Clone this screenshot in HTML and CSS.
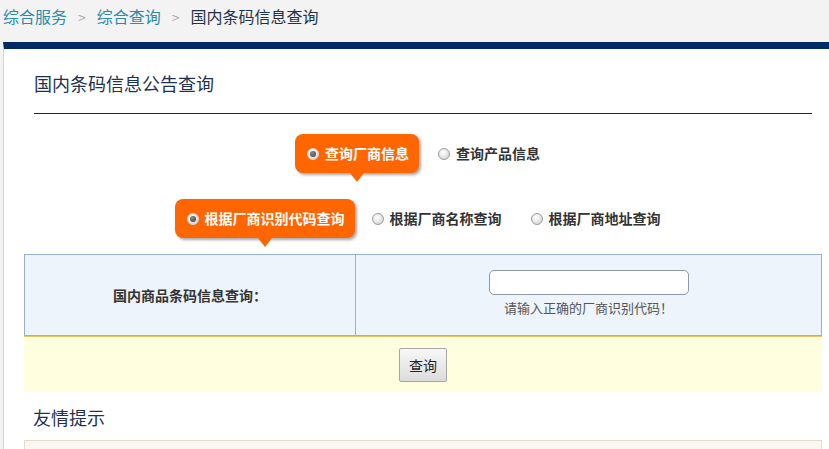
FILE: index.html
```html
<!DOCTYPE html>
<html lang="zh-CN">
<head>
<meta charset="utf-8">
<title>国内条码信息查询</title>
<link rel="stylesheet" href="styles.css">
</head>
<body>
<div class="crumb">
  <a class="crumb-link" href="#">综合服务</a><span class="sep">&gt;</span><a class="crumb-link" href="#">综合查询</a><span class="sep">&gt;</span><span class="crumb-cur">国内条码信息查询</span>
</div>
<div class="page">
  <h2 class="title">国内条码信息公告查询</h2>

  <div class="opt-row row1">
    <label class="bubble"><span class="radio checked"></span>查询厂商信息</label>
    <label class="opt gap19"><span class="radio"></span>查询产品信息</label>
  </div>

  <div class="opt-row row2">
    <label class="bubble"><span class="radio checked"></span>根据厂商识别代码查询</label>
    <label class="opt gap17"><span class="radio"></span>根据厂商名称查询</label>
    <label class="opt gap29"><span class="radio"></span>根据厂商地址查询</label>
  </div>

  <div class="query">
    <div class="q-label">国内商品条码信息查询：</div>
    <div class="q-field">
      <input class="q-input" type="text">
      <div class="q-hint">请输入正确的厂商识别代码！</div>
    </div>
  </div>
  <div class="q-actions"><button class="btn" type="button">查询</button></div>

  <h2 class="tips-title">友情提示</h2>
  <div class="tips-box"></div>
</div>
</body>
</html>
```

FILE: styles.css
```css
html, body {
  margin: 0;
  padding: 0;
}
body {
  background: #f3f3f3;
  font-family: "Noto Sans CJK SC", "Noto Sans", sans-serif;
  overflow: hidden;
  width: 829px;
  height: 449px;
}
.crumb {
  height: 42px;
  padding-left: 3px;
  font-size: 16px;
  line-height: 32px;
  display: flex;
  align-items: baseline;
}
.crumb-link {
  color: #2b8bab;
  text-decoration: none;
}
.sep {
  color: #a9a9a9;
  font-size: 14px;
  margin: 0 11px;
}
.crumb-cur {
  color: #1f3348;
}
.page {
  margin-left: 3px;
  border-left: 1px solid #d4d4d4;
  border-top: 7px solid #032b63;
  background: #fff;
  width: 860px;
  height: 420px;
}
.title {
  margin: 22px 0 0 30px;
  width: 778px;
  padding-bottom: 18px;
  border-bottom: 1px solid #13294b;
  font-size: 18px;
  line-height: 24px;
  font-weight: normal;
  color: #1f3250;
}
.opt-row {
  width: 825px;
  display: flex;
  justify-content: center;
  align-items: center;
  font-size: 14px;
  font-weight: bold;
  color: #333;
}
.row1 {
  margin-top: 20px;
  padding-left: 1px;
}
.row2 {
  margin-top: 26px;
  padding-left: 1px;
}
.bubble {
  position: relative;
  display: flex;
  align-items: center;
  background: #ff6600;
  color: #fff;
  border-radius: 8px;
  padding: 10px 10px 10px 12px;
  line-height: 19px;
  box-shadow: 2px 2px 3px rgba(0, 0, 0, 0.35);
}
.bubble::after {
  content: "";
  position: absolute;
  left: 50%;
  bottom: -9px;
  margin-left: -7px;
  border-left: 7px solid transparent;
  border-right: 7px solid transparent;
  border-top: 9px solid #ff6600;
}
.opt {
  display: flex;
  align-items: center;
  line-height: 19px;
}
.gap19 { margin-left: 19px; }
.gap17 { margin-left: 17px; }
.gap29 { margin-left: 29px; }
.radio {
  width: 10px;
  height: 10px;
  border-radius: 50%;
  border: 1px solid #9c9c9c;
  background: radial-gradient(circle at 40% 35%, #ffffff 0%, #e9e9e9 45%, #c9c9c9 100%);
  margin-right: 6px;
  position: relative;
  flex: none;
}
.bubble .radio {
  border-color: #d9d9d9;
}
.radio.checked::after {
  content: "";
  position: absolute;
  left: 2px;
  top: 2px;
  width: 6px;
  height: 6px;
  border-radius: 50%;
  background: radial-gradient(circle at 40% 35%, #8a8a8a, #3d3d3d);
}
.query {
  margin: 16px 0 0 20px;
  width: 796px;
  display: grid;
  grid-template-columns: 331px 1fr;
  border: 1px solid #94b2d8;
  background: #edf4fc;
}
.q-label {
  border-right: 1px solid #94b2d8;
  display: flex;
  align-items: center;
  justify-content: center;
  font-size: 14px;
  font-weight: bold;
  color: #333;
}
.q-field {
  padding: 15px 0 18px;
  display: flex;
  flex-direction: column;
  align-items: center;
}
.q-input {
  box-sizing: border-box;
  width: 200px;
  height: 25px;
  border: 1px solid #8f9aa6;
  border-radius: 5px;
  background: #fff;
  margin: 0;
}
.q-hint {
  margin-top: 4px;
  font-size: 13px;
  line-height: 18px;
  color: #555;
}
.q-actions {
  margin-left: 20px;
  width: 798px;
  height: 55px;
  border-top: 1px solid #e6c567;
  background: #fffedf;
  display: flex;
  align-items: center;
  justify-content: center;
}
.btn {
  width: 48px;
  height: 34px;
  border: 1px solid #a6a6a6;
  border-radius: 2px;
  background: linear-gradient(#f8f8f8, #dcdcdc);
  font-family: "Noto Sans CJK SC", sans-serif;
  font-size: 14px;
  color: #222;
  padding: 0;
}
.tips-title {
  margin: 13px 0 0 29px;
  font-size: 18px;
  line-height: 24px;
  font-weight: normal;
  color: #1f3250;
}
.tips-box {
  margin: 11px 0 0 20px;
  width: 796px;
  height: 40px;
  border: 1px solid #e3dccd;
  background: #faf7f0;
}
```
